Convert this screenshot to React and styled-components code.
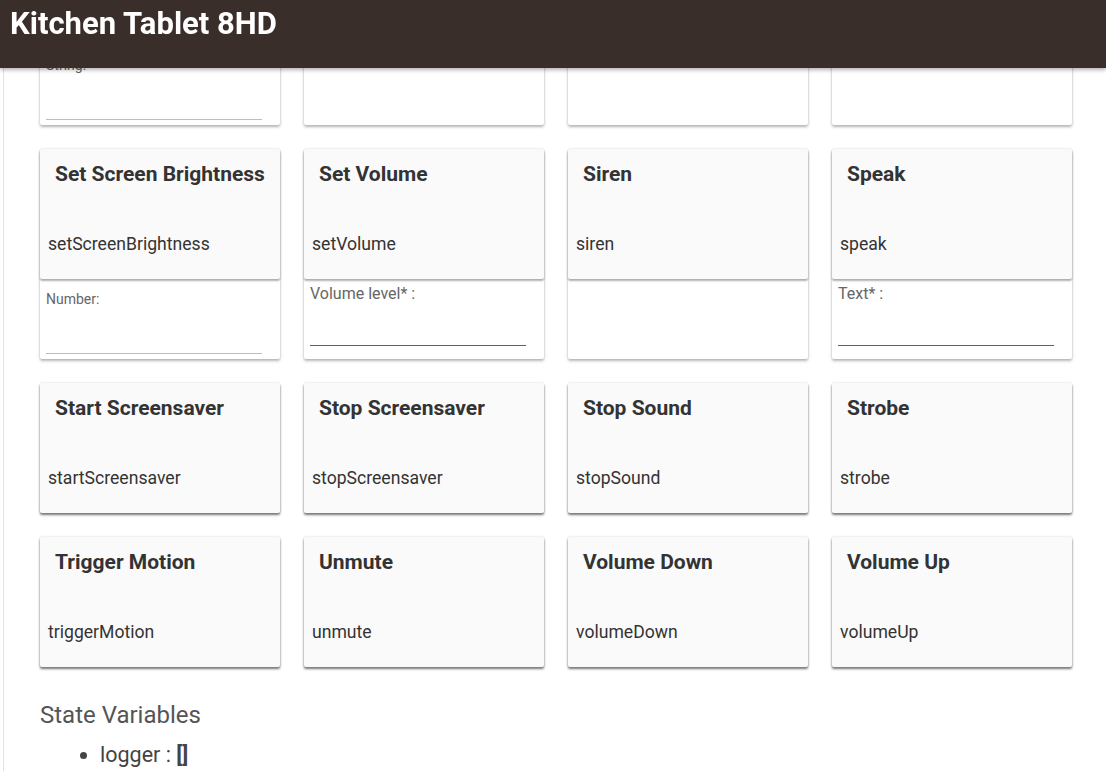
import React from "react";
import styled, { createGlobalStyle } from "styled-components";

const GlobalStyle = createGlobalStyle`
    body {
        margin: 0;
        background: #ffffff;
        font-family: Roboto, "Noto Sans", Arial, sans-serif;
        color: #333333;
    }
`;

const TopBar = styled.header`
    position: fixed;
    top: 0;
    left: 0;
    right: 0;
    height: 68px;
    background: #3a2e2b;
    box-shadow: 0 2px 4px rgba(0, 0, 0, 0.3);
    z-index: 10;
`;

const TopTitle = styled.h1`
    margin: 0;
    padding: 6px 10px;
    color: #ffffff;
    font-size: 31px;
    font-weight: 700;
    line-height: 36px;
`;

const Page = styled.div`
    margin-left: 3px;
    border-left: 1px solid #e3e3e3;
    min-height: 100vh;
`;

const Main = styled.main`
    margin-top: -85px;
    padding: 0 0 40px 36px;
`;

const Grid = styled.div`
    display: grid;
    grid-template-columns: repeat(4, 240px);
    column-gap: 24px;
    row-gap: 24px;
`;

const Cell = styled.div`
    display: flex;
    flex-direction: column;
    background: #ffffff;
    border-radius: 2px;
    box-shadow: 0 2px 3px rgba(0, 0, 0, 0.28), 0 0 3px rgba(0, 0, 0, 0.08);
`;

const CommandCard = styled.div`
    flex: 0 0 130px;
    display: flex;
    flex-direction: column;
    justify-content: space-between;
    background: #fafafa;
    border-radius: 2px;
    box-shadow: 0 2px 2px rgba(0, 0, 0, 0.3), 0 0 2px rgba(0, 0, 0, 0.1);
    position: relative;
`;

const CommandTitle = styled.div`
    padding: 12px 15px 0;
    font-size: 21px;
    font-weight: 700;
    line-height: 26px;
    color: #333333;
`;

const CommandName = styled.div`
    padding: 0 8px 24px;
    font-size: 17.6px;
    line-height: 22px;
    color: #333333;
`;

const Params = styled.div`
    flex: 1 0 80px;
    min-height: 80px;
    box-sizing: border-box;
    display: flex;
    flex-direction: column;
    padding: 0 18px 0 6px;
`;

const ParamLabel = styled.label`
    display: block;
    color: #666666;
    font-size: ${(p) => (p.small ? "14px" : "16px")};
    line-height: 20px;
    margin-top: ${(p) => (p.small ? "10px" : "5px")};
`;

const ParamInput = styled.input`
    display: block;
    margin-top: ${(p) => (p.small ? "25px" : "22px")};
    width: 100%;
    box-sizing: border-box;
    height: 20px;
    border: 0;
    border-bottom: 1px solid ${(p) => (p.required ? "#b8393f" : "#bdbdbd")};
    background: transparent;
    outline: none;
    padding: 0;
`;

const SectionTitle = styled.h2`
    margin: 33px 0 0 0;
    font-size: 24px;
    font-weight: 400;
    color: #555555;
    line-height: 30px;
`;

const StateList = styled.ul`
    margin: 13px 0 0 0;
    padding-left: 60px;
    font-size: 21.5px;
    line-height: 24px;
    color: #444444;
`;

const rows = [
    [
        { id: "r1a", param: { label: "String:", small: true } },
        { id: "r1b", empty: true },
        { id: "r1c", empty: true },
        { id: "r1d", empty: true },
    ],
    [
        { title: "Set Screen Brightness", cmd: "setScreenBrightness", param: { label: "Number:", small: true } },
        { title: "Set Volume", cmd: "setVolume", param: { label: "Volume level* :", required: true } },
        { title: "Siren", cmd: "siren", empty: true },
        { title: "Speak", cmd: "speak", param: { label: "Text* :", required: true } },
    ],
    [
        { title: "Start Screensaver", cmd: "startScreensaver" },
        { title: "Stop Screensaver", cmd: "stopScreensaver" },
        { title: "Stop Sound", cmd: "stopSound" },
        { title: "Strobe", cmd: "strobe" },
    ],
    [
        { title: "Trigger Motion", cmd: "triggerMotion" },
        { title: "Unmute", cmd: "unmute" },
        { title: "Volume Down", cmd: "volumeDown" },
        { title: "Volume Up", cmd: "volumeUp" },
    ],
];

const Command = ({ title, cmd, param, empty }) => (
    <Cell>
        <CommandCard>
            <CommandTitle>{title}</CommandTitle>
            <CommandName>{cmd}</CommandName>
        </CommandCard>
        {param && (
            <Params>
                <ParamLabel small={param.small}>{param.label}</ParamLabel>
                <ParamInput small={param.small} required={param.required} />
            </Params>
        )}
        {empty && <Params />}
    </Cell>
);

const App = () => {
    return (
        <>
            <GlobalStyle />
            <TopBar>
                <TopTitle>Kitchen Tablet 8HD</TopTitle>
            </TopBar>
            <Page>
                <Main>
                    <Grid>
                        {rows.flat().map((c) => (
                            <Command key={c.cmd || c.id} {...c} />
                        ))}
                    </Grid>
                    <SectionTitle>State Variables</SectionTitle>
                    <StateList>
                        <li>
                            logger : <b>[]</b>
                        </li>
                    </StateList>
                </Main>
            </Page>
        </>
    );
};

export default App;
